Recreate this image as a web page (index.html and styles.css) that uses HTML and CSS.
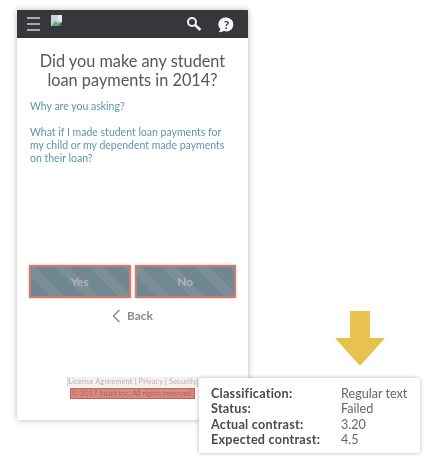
FILE: index.html
```html
<!DOCTYPE html>
<html lang="en">
<head>
    <meta charset="UTF-8">
    <meta name="viewport" content="width=device-width, initial-scale=1.0">
    <title>contrast check</title>
  <link rel="stylesheet" href="styles.css">
</head>
<body>

<div class="phone">
    <div class="topbar">
        <div class="menu"><span></span><span></span><span></span></div>
        <svg class="broken" width="11" height="11" viewBox="0 0 11 11">
            <rect width="11" height="11" fill="#e8eef0"/>
            <path d="M0 0h7v4l4 3v4H0z" fill="#c4d6dc"/>
            <path d="M1 10l3-4 3 2 4-1v4H1z" fill="#7fa37a"/>
            <path d="M7 11l4-4v4z" fill="#55585a"/>
        </svg>
        <svg class="search" width="16" height="16" viewBox="0 0 16 16">
            <circle cx="6" cy="6" r="4" fill="none" stroke="#f2f2f2" stroke-width="2"/>
            <path d="M9 9l5.5 5" stroke="#f2f2f2" stroke-width="2.6"/>
        </svg>
        <svg class="help" width="17" height="17" viewBox="0 0 17 17">
            <path d="M9.5 1.5a7 7 0 1 1-2.5 13.6c-1.500.9-3.500 1.200-5.500 1 1.200-.8 1.800-1.900 1.700-3A7 7 0 0 1 9.500 1.500z" fill="#f7f7f7"/>
            <text x="9.500" y="12.500" class="help-mark">?</text>
        </svg>
    </div>
    <div class="content">
        <h2>Did you make any student loan payments in 2014?</h2>
        <p class="link">Why are you asking?</p>
        <p class="link">What if I made student loan payments for my child or my dependent made payments on their loan?</p>
        <div class="row">
            <button>Yes</button>
            <button>No</button>
        </div>
        <div class="back">
            <svg width="9" height="14" viewBox="0 0 9 14"><path d="M7.500 1L1.500 7l6 6" fill="none" stroke="#8b8d8f" stroke-width="1.500"/></svg>
            <span>Back</span>
        </div>
        <div class="footer">
            <div class="legal">License Agreement | Privacy | Security</div>
            <div class="copy">© 2017 Intuit Inc. All rights reserved.</div>
        </div>
    </div>
</div>

<svg class="arrow" width="50" height="55" viewBox="0 0 50 55">
    <path d="M15 0h20v27h15L25 55 0 27h15z" fill="#e9c14f"/>
</svg>

<div class="tooltip">
    <b>Classification:</b><span>Regular text</span>
    <b>Status:</b><span>Failed</span>
    <b>Actual contrast:</b><span>3.20</span>
    <b>Expected contrast:</b><span>4.5</span>
</div>

</body>
</html>
```

FILE: styles.css
```css
*{
    margin: 0;
    padding: 0;
    box-sizing: border-box;
}
body{
    width: 430px;
    height: 462px;
    background: #fff;
    font-family: 'Lato', sans-serif;
    overflow: hidden;
    position: relative;
    padding: 10px 0 0 17px;
}
.phone{
    width: 231px;
    height: 410px;
    background: #fff;
    box-shadow: 0 0 6px rgba(0,0,0,.28);
}
.topbar{
    height: 28px;
    background: #35373a;
    display: flex;
    align-items: center;
    padding: 0 14px 0 10px;
    filter: blur(.5px);
}
.menu{
    width: 13px;
    display: flex;
    flex-direction: column;
    gap: 4px;
    margin-right: 11px;
}
.menu span{
    height: 2px;
    background: #a9aaab;
}
.broken{
    margin: -8px auto 0 0;
}
.search{
    margin-right: 15px;
}
.help-mark{
    font-size: 12px;
    font-weight: 700;
    fill: #35373a;
    text-anchor: middle;
}
.content{
    padding: 13px 13px 0;
    filter: blur(.6px);
}
h2{
    font-size: 16.300px;
    font-weight: 400;
    line-height: 19px;
    color: #55575a;
    text-align: center;
    margin-bottom: 11px;
}
.link{
    font-size: 10.500px;
    line-height: 13px;
    color: #5d97a8;
    margin-bottom: 13px;
}
.row{
    display: flex;
    gap: 4px;
    margin: 100px -1px 0;
}
button{
    flex: 1;
    height: 33px;
    border: 2px solid #d2796d;
    background: repeating-linear-gradient(45deg, #6e8791 0 14px, #7c8e96 14px 24px);
    color: #b3b4b6;
    font-family: 'Lato', sans-serif;
    font-size: 12px;
    font-weight: 700;
    box-shadow: 0 0 3px rgba(0,0,0,.25);
}
.back{
    display: flex;
    align-items: center;
    justify-content: center;
    gap: 6px;
    margin-top: 10px;
    font-size: 12px;
    font-weight: 700;
    color: #8b8d8f;
}
.footer{
    margin-top: 54px;
    font-size: 7.500px;
    text-align: center;
}
.legal{
    color: #b5b5b5;
    line-height: 10px;
    width: fit-content;
    margin: 0 auto;
    background: #f7eeee;
    border: 1px solid #ddd0d0;
    border-width: 0 1px;
    letter-spacing: .1px;
}
.copy{
    width: fit-content;
    margin: 1px auto 0;
    padding: 0 1px;
    line-height: 9px;
    background: #d98a80;
    border: 1px solid #cb5e50;
    color: #a86a62;
}
.arrow{
    position: absolute;
    left: 335px;
    top: 311px;
}
.tooltip{
    position: absolute;
    left: 199px;
    top: 378px;
    width: 221px;
    height: 75px;
    background: #fff;
    border-radius: 3px;
    box-shadow: 0 0 4px rgba(0,0,0,.3);
    padding: 8px 0 0 12px;
    display: grid;
    grid-template-columns: 130px 1fr;
    grid-auto-rows: 15.300px;
    font-family: 'Lato', sans-serif;
    font-size: 12.600px;
    line-height: 15.300px;
    color: #666;
    filter: blur(.3px);
}
.tooltip b{
    color: #4a4a4a;
    letter-spacing: .25px;
}
```
